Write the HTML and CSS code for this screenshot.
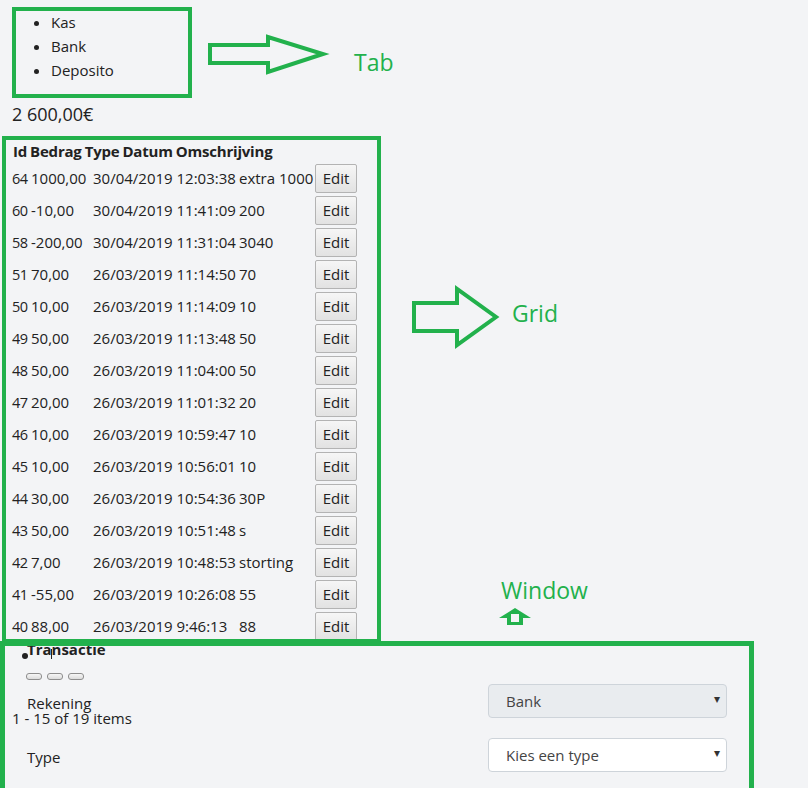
FILE: index.html
```html
<!DOCTYPE html>
<html lang="nl">
<head>
<meta charset="utf-8">
<title>Transacties</title>
<link rel="stylesheet" href="styles.css">
</head>
<body>
<div class="page">
  <ul class="tabs">
    <li>Kas</li>
    <li>Bank</li>
    <li>Deposito</li>
  </ul>
  <div class="total">2 600,00€</div>

  <div class="grid">
    <div class="grid-head">
      <span>Id</span><span>Bedrag</span><span>Type</span><span>Datum</span><span>Omschrijving</span>
    </div>
    <div class="row"><span class="id">64</span><span>1000,00</span><span>30/04/2019 12:03:38</span><span>extra 1000</span><button class="edit">Edit</button></div>
    <div class="row"><span class="id">60</span><span>-10,00</span><span>30/04/2019 11:41:09</span><span>200</span><button class="edit">Edit</button></div>
    <div class="row"><span class="id">58</span><span>-200,00</span><span>30/04/2019 11:31:04</span><span>3040</span><button class="edit">Edit</button></div>
    <div class="row"><span class="id">51</span><span>70,00</span><span>26/03/2019 11:14:50</span><span>70</span><button class="edit">Edit</button></div>
    <div class="row"><span class="id">50</span><span>10,00</span><span>26/03/2019 11:14:09</span><span>10</span><button class="edit">Edit</button></div>
    <div class="row"><span class="id">49</span><span>50,00</span><span>26/03/2019 11:13:48</span><span>50</span><button class="edit">Edit</button></div>
    <div class="row"><span class="id">48</span><span>50,00</span><span>26/03/2019 11:04:00</span><span>50</span><button class="edit">Edit</button></div>
    <div class="row"><span class="id">47</span><span>20,00</span><span>26/03/2019 11:01:32</span><span>20</span><button class="edit">Edit</button></div>
    <div class="row"><span class="id">46</span><span>10,00</span><span>26/03/2019 10:59:47</span><span>10</span><button class="edit">Edit</button></div>
    <div class="row"><span class="id">45</span><span>10,00</span><span>26/03/2019 10:56:01</span><span>10</span><button class="edit">Edit</button></div>
    <div class="row"><span class="id">44</span><span>30,00</span><span>26/03/2019 10:54:36</span><span>30P</span><button class="edit">Edit</button></div>
    <div class="row"><span class="id">43</span><span>50,00</span><span>26/03/2019 10:51:48</span><span>s</span><button class="edit">Edit</button></div>
    <div class="row"><span class="id">42</span><span>7,00</span><span>26/03/2019 10:48:53</span><span>storting</span><button class="edit">Edit</button></div>
    <div class="row"><span class="id">41</span><span>-55,00</span><span>26/03/2019 10:26:08</span><span>55</span><button class="edit">Edit</button></div>
    <div class="row"><span class="id">40</span><span>88,00</span><span>26/03/2019 9:46:13</span><span>88</span><button class="edit">Edit</button></div>

    <div class="pager">
      <div class="pager-top"><span class="pager-dot"></span><span class="pager-bar"></span></div>
      <div class="pager-pages"><span class="pbtn"></span><span class="pbtn"></span><span class="pbtn"></span></div>
      <div class="pager-info">1 - 15 of 19 items</div>
    </div>
  </div>

  <div class="window">
    <div class="window-title">Transactie</div>
    <div class="form">
      <div class="form-row">
        <label class="form-label">Rekening</label>
        <div class="select disabled"><span>Bank</span><span class="caret">▾</span></div>
      </div>
      <div class="form-row">
        <label class="form-label">Type</label>
        <div class="select"><span>Kies een type</span><span class="caret">▾</span></div>
      </div>
    </div>
  </div>

  <!-- annotations drawn over the page -->
  <div class="note-box box-tab"></div>
  <div class="note-box box-grid"></div>
  <div class="note-box box-window"></div>
  <svg class="arrows" width="808" height="788" viewBox="0 0 808 788">
    <polygon points="210,45 268,45 268,37 323,54 268,72 268,63 210,63" fill="none" stroke="#22b14c" stroke-width="4" stroke-linejoin="miter"/>
    <polygon points="414,303 457,303 457,289 496,317 457,345 457,331 414,331" fill="none" stroke="#22b14c" stroke-width="4" stroke-linejoin="miter"/>
    <polygon points="515,608 531,618 523,618 523,625 507,625 507,618 499,618" fill="#22b14c"/>
    <rect x="511" y="614" width="8" height="8" fill="#f3f4f6"/>
  </svg>
  <div class="note-label label-tab">Tab</div>
  <div class="note-label label-grid">Grid</div>
  <div class="note-label label-window">Window</div>
</div>
</body>
</html>
```
FILE: styles.css
```css
html, body {
  margin: 0;
  padding: 0;
  background: #f3f4f6;
}
body {
  font-family: "Open Sans", "Noto Sans", sans-serif;
  font-size: 15px;
  color: #222;
}
.page {
  position: relative;
  width: 808px;
  height: 788px;
  overflow: hidden;
}
.tabs {
  margin: 10px 0 0;
  padding: 0 0 0 51px;
  line-height: 24px;
}
.total {
  margin: 20px 0 0 12px;
  font-size: 18px;
  line-height: 24px;
}
.grid {
  margin: 14px 0 0 12px;
}
.grid-head {
  display: flex;
  gap: 3px;
  padding-left: 1px;
  font-weight: 700;
  line-height: 20px;
  height: 22px;
  align-items: center;
  letter-spacing: -0.2px;
}
.row {
  display: grid;
  grid-template-columns: 19px 62px 146px 76px 42px;
  height: 32px;
  align-items: center;
  white-space: nowrap;
}
.row .id {
  font-size: 14.5px;
  letter-spacing: -0.5px;
}
.edit {
  height: 29px;
  width: 42px;
  padding: 0;
  font: inherit;
  font-size: 15px;
  color: #222;
  background: linear-gradient(#f6f6f6, #e2e2e2);
  border: 1px solid #b3b3b3;
  border-radius: 2px;
}
.pager {
  position: relative;
  height: 110px;
}
.pager-top {
  display: flex;
  align-items: center;
  height: 22px;
  padding-left: 10px;
}
.pager-dot {
  width: 6px;
  height: 6px;
  border-radius: 50%;
  background: #222;
  margin-top: 6px;
}
.pager-bar {
  width: 1px;
  height: 10px;
  background: #222;
  margin-left: 23px;
  margin-top: 2px;
}
.pager-pages {
  display: flex;
  gap: 5px;
  margin: 9px 0 0 14px;
}
.pbtn {
  width: 14px;
  height: 5px;
  border: 1px solid #8e8e8e;
  border-radius: 3px;
  background: linear-gradient(#f6f6f6, #dcdcdc);
}
.pager-info {
  margin-top: 28px;
  font-size: 15px;
  line-height: 20px;
}
.window {
  position: absolute;
  left: 0;
  top: 639px;
  width: 754px;
  height: 160px;
}
.window-title {
  padding-left: 27px;
  font-weight: 700;
  line-height: 20px;
}
.form {
  margin-top: 25px;
  padding-left: 27px;
  display: flex;
  flex-direction: column;
  gap: 20px;
}
.form-row {
  display: grid;
  grid-template-columns: 461px 239px;
  align-items: center;
}
.form-label {
  font-size: 15px;
  padding-top: 4px;
}
.select {
  height: 34px;
  box-sizing: border-box;
  border: 1px solid #ced4da;
  border-radius: 4px;
  background: #fff;
  display: flex;
  align-items: center;
  justify-content: space-between;
  padding: 0 6px 0 17px;
  font-size: 15px;
  color: #444;
}
.select.disabled {
  background: #e9ecef;
}
.caret {
  font-size: 12px;
  color: #333;
  margin-top: -6px;
}
.note-box {
  position: absolute;
  box-sizing: border-box;
  border: 4px solid #22b14c;
}
.box-tab {
  left: 12px;
  top: 7px;
  width: 180px;
  height: 91px;
}
.box-grid {
  left: 2px;
  top: 136px;
  width: 379px;
  height: 507px;
}
.box-window {
  left: 0;
  top: 641px;
  width: 754px;
  height: 200px;
  border-width: 5px;
}
.arrows {
  position: absolute;
  left: 0;
  top: 0;
}
.note-label {
  position: absolute;
  color: #22b14c;
  font-size: 23px;
  line-height: 28px;
}
.label-tab { left: 354px; top: 48px; }
.label-grid { left: 512px; top: 299px; }
.label-window { left: 501px; top: 576px; }
```
